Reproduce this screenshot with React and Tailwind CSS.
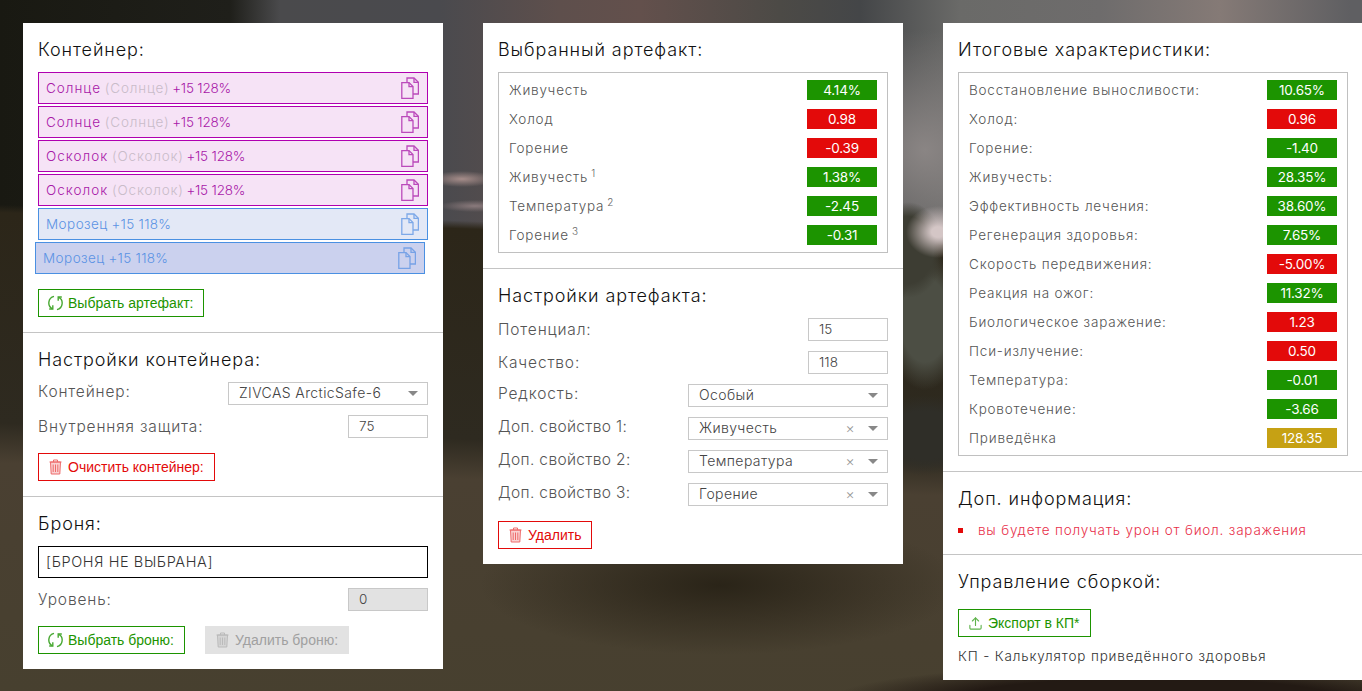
import { Upload } from "lucide-react";

const GREEN = "bg-[#1c9400]";
const RED = "bg-[#e30a0a]";

const artefacts = [
  { name: "Солнце", sub: "(Солнце)", rest: "+15 128%", kind: "purple" },
  { name: "Солнце", sub: "(Солнце)", rest: "+15 128%", kind: "purple" },
  { name: "Осколок", sub: "(Осколок)", rest: "+15 128%", kind: "purple" },
  { name: "Осколок", sub: "(Осколок)", rest: "+15 128%", kind: "purple" },
  { name: "Морозец", rest: "+15 118%", kind: "blue" },
  { name: "Морозец", rest: "+15 118%", kind: "active" },
];

const selected = [
  ["Живучесть", "4.14%", GREEN],
  ["Холод", "0.98", RED],
  ["Горение", "-0.39", RED],
  ["Живучесть", "1.38%", GREEN, "1"],
  ["Температура", "-2.45", GREEN, "2"],
  ["Горение", "-0.31", GREEN, "3"],
];

const totals = [
  ["Восстановление выносливости:", "10.65%", GREEN],
  ["Холод:", "0.96", RED],
  ["Горение:", "-1.40", GREEN],
  ["Живучесть:", "28.35%", GREEN],
  ["Эффективность лечения:", "38.60%", GREEN],
  ["Регенерация здоровья:", "7.65%", GREEN],
  ["Скорость передвижения:", "-5.00%", RED],
  ["Реакция на ожог:", "11.32%", GREEN],
  ["Биологическое заражение:", "1.23", RED],
  ["Пси-излучение:", "0.50", RED],
  ["Температура:", "-0.01", GREEN],
  ["Кровотечение:", "-3.66", GREEN],
  ["Приведёнка", "128.35", "bg-[#c6a114]"],
];

function CopyIcon() {
  return (
    <svg width="18" height="22" viewBox="0 0 18 22" fill="none" stroke="currentColor" strokeWidth="1.3" className="shrink-0 opacity-75">
      <path d="M6 5V1h7l4.4 4.4V17H12" />
      <path d="M13 1v4.4h4.4" />
      <path d="M.8 5.6H8l4 4V21.3H.8z" />
      <path d="M8 5.6v4h4" />
    </svg>
  );
}

function RefreshIcon() {
  return (
    <svg width="15" height="16" viewBox="0 0 15 16" fill="none" stroke="currentColor" strokeWidth="1.4" className="shrink-0 opacity-80">
      <path d="M6 1.4A6.6 6.6 0 0 0 4.6 13.8" />
      <path d="M4.8 10.2v3.8H1.2" />
      <path d="M9 14.6A6.6 6.6 0 0 0 10.4 2.2" />
      <path d="M10.2 5.8V2h3.6" />
    </svg>
  );
}

function TrashIcon() {
  return (
    <svg width="15" height="16" viewBox="0 0 15 16" fill="none" stroke="currentColor" strokeWidth="1" className="shrink-0 opacity-60">
      <path d="M1.5 3h12M5.5 3V1h4v2" />
      <path d="M2.5 3l.7 12h8.6l.7-12z" fill="currentColor" fillOpacity="0.3" />
      <path d="M5.2 5.5v7.5M7.5 5.5v7.5M9.8 5.5v7.5" />
    </svg>
  );
}

function UploadIcon() {
  return <Upload size={15} strokeWidth={1.8} className="shrink-0 opacity-70" />;
}

function Heading({ children }) {
  return <h2 className="h-[24px] text-[18px] leading-[24px] font-light tracking-[0.9px] text-[#111]">{children}</h2>;
}

function ArtefactRow({ item }) {
  const styles = {
    purple: "border-[#b000b0] bg-[#f6e3f6] text-[#a818a8]",
    blue: "border-[#4a90e2] bg-[#e3e8f6] text-[#5b93e4]",
    active: "border-[#4a90e2] bg-[#cbd1ee] text-[#5b93e4] -translate-x-[3px]",
  };
  const purple = item.kind === "purple";
  return (
    <div className={`flex h-[32px] items-center justify-between border pl-[7px] pr-[8px] text-[13.5px] font-light ${styles[item.kind]}`}>
      <span>
        <span className={purple ? "tracking-[1px]" : "tracking-[0.45px]"}>{item.name}</span>{" "}
        {item.sub && <span className="tracking-[0.8px] text-[#c9bcc9]">{item.sub} </span>}
        <span className={purple ? "-ml-[2px] -tracking-[0.2px]" : "tracking-[0.3px]"}>{item.rest}</span>
      </span>
      <CopyIcon />
    </div>
  );
}

function OutlineButton({ icon: Icon, color, children }) {
  return (
    <button className={`flex h-[28px] items-center gap-[5px] border pl-[9px] pr-[10px] font-['Liberation_Sans',sans-serif] text-[14px] ${color}`}>
      <Icon />
      {children}
    </button>
  );
}

function Field({ label, shift, tight, children }) {
  return (
    <div className="flex h-[33px] items-start justify-between">
      <span className={`h-[23px] text-[15.5px] leading-[23px] font-light text-[#555] ${shift ? "-mt-[2px]" : ""} ${tight ? "tracking-[0.35px]" : "tracking-[0.85px]"}`}>{label}</span>
      {children}
    </div>
  );
}

function NumberBox({ value, disabled }) {
  return (
    <div className={`flex h-[23px] w-[80px] items-center border border-[#c8c8c8] pl-[10px] text-[13.5px] font-light text-[#444] ${disabled ? "bg-[#e2e2e2]" : "bg-white"}`}>
      {value}
    </div>
  );
}

function SelectBox({ value, clearable }) {
  return (
    <div className="flex h-[23px] w-[200px] items-center border border-[#c8c8c8] bg-white pl-[10px] pr-[9px] text-[14px] leading-[20px] font-light tracking-[0.4px] text-[#444]">
      <span className="flex-1 -translate-y-[1px]">{value}</span>
      {clearable && <span className="mr-[13px] -translate-y-[1px] text-[14px] text-[#999]">×</span>}
      <span className="h-0 w-0 border-x-[5px] border-t-[5px] border-x-transparent border-t-[#888]" />
    </div>
  );
}

function StatTable({ rows }) {
  return (
    <div className="mt-[10px] flex flex-col gap-[9px] border border-[#c0c0c0] px-[10px] py-[7px]">
      {rows.map(([label, value, color, note], i) => (
        <div key={i} className="flex h-[20px] items-center justify-between">
          <span className="text-[13.5px] font-light tracking-[0.8px] text-[#555]">
            {label}
            {note && <sup className="ml-[3px] text-[10px] text-[#666]">{note}</sup>}
          </span>
          <span className={`w-[70px] text-center text-[13.5px] leading-[20px] -tracking-[0.2px] text-white ${color}`}>{value}</span>
        </div>
      ))}
    </div>
  );
}

function Panel({ children }) {
  return <div className="w-[420px] shrink-0 divide-y divide-[#c4c4c4] bg-white">{children}</div>;
}

function Section({ className, children }) {
  return <section className={`px-[15px] pt-[15px] ${className}`}>{children}</section>;
}

export default function App() {
  return (
    <div className="h-[691px] w-full overflow-hidden bg-[radial-gradient(ellipse_32px_26px_at_938px_232px,#d4c6c6_20%,transparent),radial-gradient(ellipse_36px_48px_at_908px_250px,#3d3d33_70%,transparent),radial-gradient(ellipse_34px_8px_at_462px_179px,#a68d8a,transparent),radial-gradient(ellipse_36px_6px_at_475px_206px,#8a7a7c,transparent),radial-gradient(ellipse_320px_36px_at_1150px_700px,#231a14_60%,transparent),radial-gradient(ellipse_60px_40px_at_925px_435px,#2f2e28_60%,transparent),radial-gradient(ellipse_40px_70px_at_925px_320px,#4c4e44_60%,transparent),radial-gradient(ellipse_240px_70px_at_720px_585px,#2a2418,transparent),linear-gradient(182deg,transparent_252px,#2c2619_260px,#2e2a20_470px,#4a4032_510px,#47402f_100%),radial-gradient(ellipse_120px_120px_at_925px_150px,#8a8584,transparent),linear-gradient(90deg,#191912_0,#1f1f1a_230px,#4a4a4c_280px,#4a4a4e_440px,#5e4f4c_560px,#63504c_640px,#4c4a46_780px,#444648_860px,#6a6a68_960px,#6e6c6c_1100px,#857a76_1220px,#5f5f62_1350px)] font-['Inter',sans-serif]">
      <div className="flex items-start gap-[40px] pl-[23px] pt-[23px]">
        <Panel>
          <Section className="pb-[15px]">
            <Heading>Контейнер:</Heading>
            <div className="mt-[10px] flex flex-col gap-[2px]">
              {artefacts.map((item, i) => <ArtefactRow key={i} item={item} />)}
            </div>
            <div className="mt-[15px] flex">
              <OutlineButton icon={RefreshIcon} color="border-[#1c9400] text-[#1c9400]">Выбрать артефакт:</OutlineButton>
            </div>
          </Section>
          <Section className="pb-[15px]">
            <Heading>Настройки контейнера:</Heading>
            <div className="mt-[10px]">
              <Field label="Контейнер:" shift><SelectBox value="ZIVCAS ArcticSafe-6" /></Field>
              <Field label="Внутренняя защита:"><NumberBox value="75" /></Field>
            </div>
            <div className="mt-[5px] flex">
              <OutlineButton icon={TrashIcon} color="border-[#e30a0a] text-[#e30a0a]">Очистить контейнер:</OutlineButton>
            </div>
          </Section>
          <Section className="pb-[15px]">
            <Heading>Броня:</Heading>
            <div className="mt-[10px] flex h-[32px] items-center border border-black pl-[7px] text-[14.5px] font-light tracking-[0.6px] text-[#333]">[БРОНЯ НЕ ВЫБРАНА]</div>
            <div className="mt-[10px]">
              <Field label="Уровень:"><NumberBox value="0" disabled /></Field>
            </div>
            <div className="mt-[5px] flex gap-[20px]">
              <OutlineButton icon={RefreshIcon} color="border-[#1c9400] text-[#1c9400]">Выбрать броню:</OutlineButton>
              <OutlineButton icon={TrashIcon} color="border-[#e2e2e2] bg-[#e2e2e2] text-[#a0a0a0]">Удалить броню:</OutlineButton>
            </div>
          </Section>
        </Panel>

        <Panel>
          <Section className="pb-[15px]">
            <Heading>Выбранный артефакт:</Heading>
            <StatTable rows={selected} />
          </Section>
          <Section className="pb-[15px]">
            <Heading>Настройки артефакта:</Heading>
            <div className="mt-[10px]">
              <Field label="Потенциал:"><NumberBox value="15" /></Field>
              <Field label="Качество:"><NumberBox value="118" /></Field>
              <Field label="Редкость:" shift><SelectBox value="Особый" /></Field>
              <Field label="Доп. свойство 1:" shift tight><SelectBox value="Живучесть" clearable /></Field>
              <Field label="Доп. свойство 2:" shift tight><SelectBox value="Температура" clearable /></Field>
              <Field label="Доп. свойство 3:" shift tight><SelectBox value="Горение" clearable /></Field>
            </div>
            <div className="mt-[5px] flex">
              <OutlineButton icon={TrashIcon} color="border-[#e30a0a] text-[#e30a0a]">Удалить</OutlineButton>
            </div>
          </Section>
        </Panel>

        <Panel>
          <Section className="pb-[15px]">
            <Heading>Итоговые характеристики:</Heading>
            <StatTable rows={totals} />
          </Section>
          <Section className="pb-[14px]">
            <Heading>Доп. информация:</Heading>
            <div className="mt-[9px] flex items-center text-[13.5px] font-light tracking-[0.8px] text-[#e8304a]">
              <span className="mr-[15px] h-[5px] w-[5px] bg-[#e30a0a]" />
              вы будете получать урон от биол. заражения
            </div>
          </Section>
          <Section className="pb-[13px]">
            <Heading>Управление сборкой:</Heading>
            <div className="mt-[15px] flex">
              <OutlineButton icon={UploadIcon} color="border-[#1c9400] text-[#1c9400]">Экспорт в КП*</OutlineButton>
            </div>
            <p className="mt-[9px] text-[13.5px] font-light tracking-[0.85px] text-[#333]">КП - Калькулятор приведённого здоровья</p>
          </Section>
        </Panel>
      </div>
    </div>
  );
}
